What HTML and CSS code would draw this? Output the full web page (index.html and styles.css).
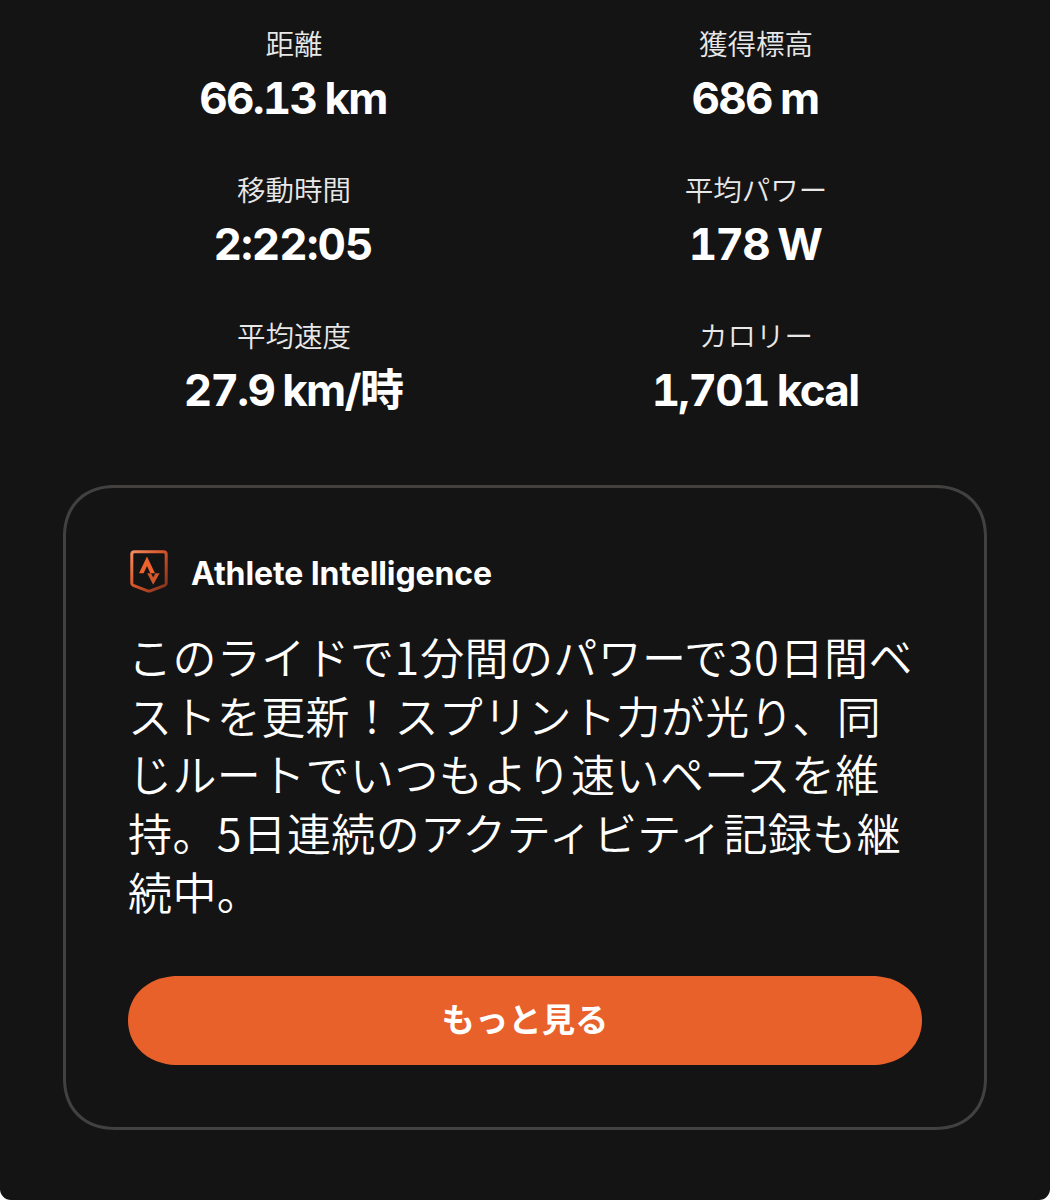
FILE: index.html
```
<!doctype html>
<html lang="ja">
<head>
    <meta charset="UTF-8" />
    <meta name="viewport" content="width=device-width, initial-scale=1.0" />
    <title>Athlete Intelligence</title>
    <link rel="stylesheet" href="styles.css">
</head>
<body>
    <main class="screen">
        <dl class="stats">
            <div class="stat">
                <dt>距離</dt>
                <dd>66.13 km</dd>
            </div>
            <div class="stat">
                <dt>獲得標高</dt>
                <dd>686 m</dd>
            </div>
            <div class="stat">
                <dt>移動時間</dt>
                <dd class="time">2:22:05</dd>
            </div>
            <div class="stat">
                <dt>平均パワー</dt>
                <dd>178 W</dd>
            </div>
            <div class="stat">
                <dt>平均速度</dt>
                <dd>27.9 km/時</dd>
            </div>
            <div class="stat">
                <dt>カロリー</dt>
                <dd>1,701 kcal</dd>
            </div>
        </dl>

        <section class="card">
            <div class="card-header">
                <svg class="badge" viewBox="0 0 38 43" aria-hidden="true">
                    <defs>
                        <linearGradient id="shield" x1="0" y1="0" x2="1" y2="1">
                            <stop offset="0" stop-color="#f58a60" />
                            <stop offset="0.45" stop-color="#d9552a" />
                            <stop offset="1" stop-color="#7c3019" />
                        </linearGradient>
                    </defs>
                    <path d="M4.5 1.8H33.5Q36.2 1.8 36.2 4.5V33.2Q36.2 34.8 34.8 35.4L20.5 40.8Q19 41.3 17.5 40.8L3.2 35.4Q1.8 34.8 1.8 33.2V4.5Q1.8 1.8 4.5 1.8Z" fill="none" stroke="url(#shield)" stroke-width="3" />
                    <path d="M9 23.2L17 6.5L25 23.2H20.4L17 16L13.6 23.2Z" fill="#f0622b" />
                    <path d="M17.2 23.2H21L23.2 27.6L25.4 23.2H29.6L23.2 34.8Z" fill="#d2562b" />
                </svg>
                <h2>Athlete Intelligence</h2>
            </div>
            <p class="summary">このライドで<span class="num">1</span>分間のパワーで<span class="num">30</span>日間ベ<br>ストを更新！スプリント力が光り、同<br>じルートでいつもより速いペースを維<br>持。<span class="num">5</span>日連続のアクティビティ記録も継<br>続中。</p>
            <button class="btn" type="button">もっと見る</button>
        </section>
    </main>
</body>
</html>
```
FILE: styles.css
```
* {
    margin: 0;
    padding: 0;
    box-sizing: border-box;
}

body {
    background: #fff;
    color: #fff;
    font-family: "Noto Sans CJK JP", sans-serif;
}

.screen {
    height: 1200px;
    padding: 23px 63px 0;
    background: #141414;
    border-radius: 0 0 11px 11px;
    overflow: hidden;
}

.stats {
    display: grid;
    grid-template-columns: 1fr 1fr;
    grid-auto-rows: 146px;
    height: 462px;
    text-align: center;
}

.stat dt {
    font-size: 28.5px;
    font-weight: 350;
    line-height: 40px;
    color: #e8e8e8;
}

.stat dd {
    margin-top: 5px;
    padding-right: 2px;
    font-family: Inter, "Noto Sans CJK JP", sans-serif;
    font-size: 44px;
    font-weight: 700;
    font-variant-numeric: tabular-nums;
    line-height: 60px;
    letter-spacing: -1.7px;
    word-spacing: -2px;
}

.stat .time {
    letter-spacing: -1px;
}

.card {
    height: 645px;
    padding: 61px 62px 0;
    border: 3px solid #424140;
    border-radius: 52px;
    corner-shape: superellipse(1.15);
}

.card-header {
    display: flex;
    align-items: center;
    height: 46px;
    gap: 23px;
}

.badge {
    width: 38px;
    height: 43px;
    margin: 0 0 1px 2px;
}

.card-header h2 {
    padding-top: 4px;
    font-family: Inter, sans-serif;
    font-size: 32px;
    font-weight: 700;
    line-height: 46px;
    letter-spacing: -0.1px;
}

.summary {
    margin-top: 32px;
    font-size: 44px;
    font-weight: 350;
    line-height: 58.7px;
    letter-spacing: 0.4px;
    white-space: nowrap;
}

.summary .num {
    font-size: 45px;
    line-height: 1;
    letter-spacing: 1px;
}

.btn {
    display: block;
    width: 100%;
    height: 89px;
    margin-top: 55px;
    padding-bottom: 6px;
    border: none;
    border-radius: 50px / 44.5px;
    corner-shape: superellipse(1.06);
    background: #e8602a;
    color: #fff;
    font-family: inherit;
    font-size: 33.4px;
    font-weight: 700;
    cursor: pointer;
}
```
